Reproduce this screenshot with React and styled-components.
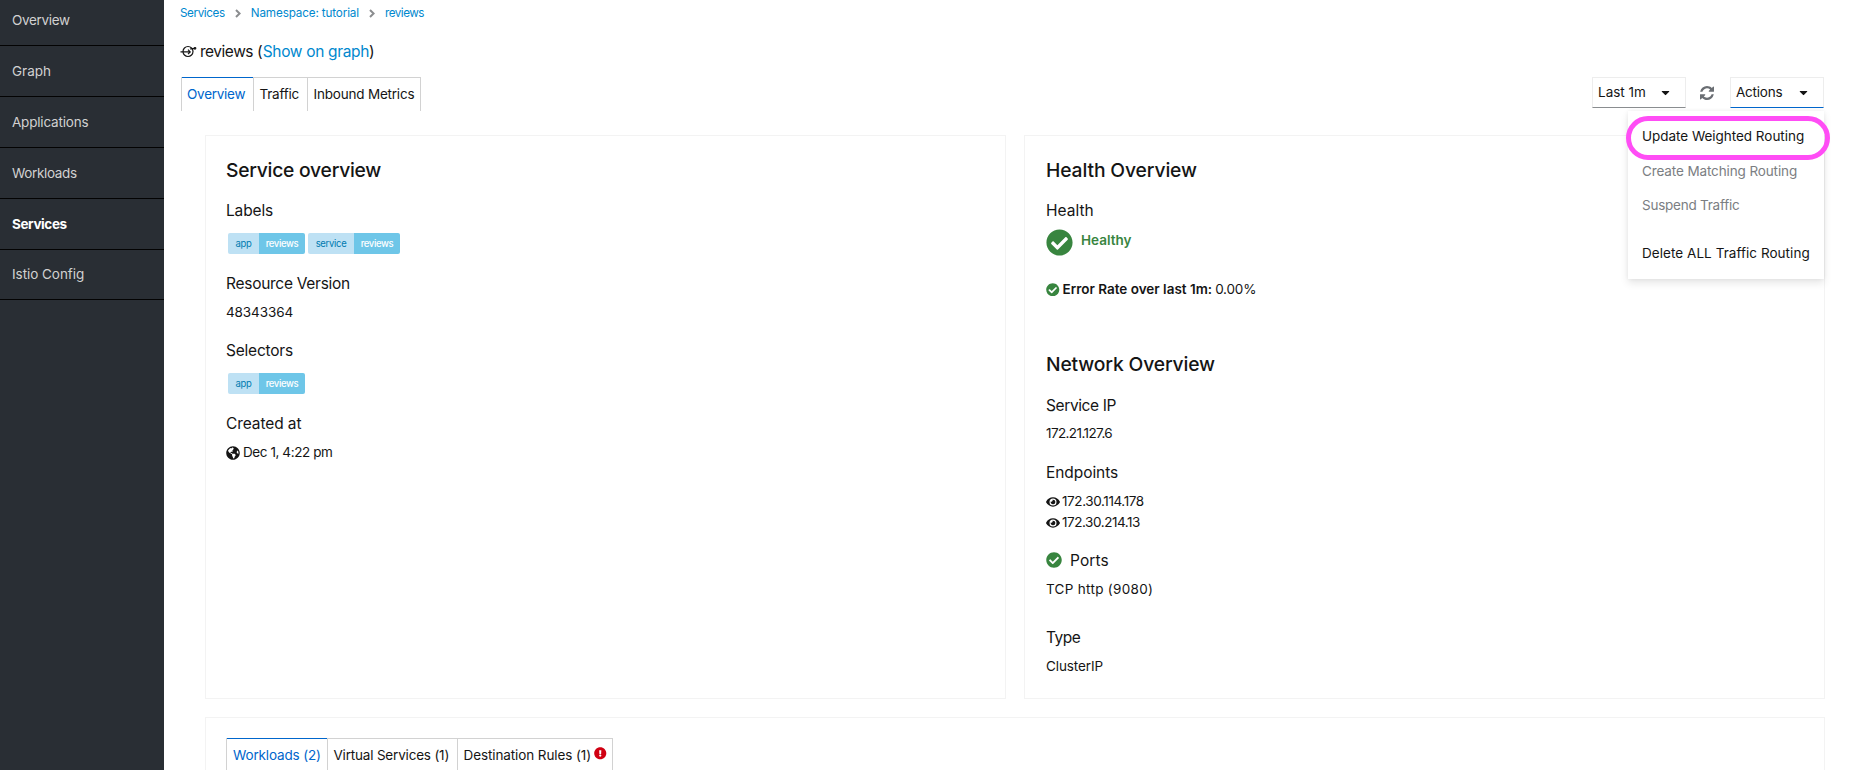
import React from "react";
import styled, { createGlobalStyle } from "styled-components";
import { FaCheckCircle, FaExclamationCircle, FaGlobeAmericas, FaEye, FaCaretDown } from "react-icons/fa";

const GlobalStyle = createGlobalStyle`
  *, *::before, *::after { box-sizing: border-box; }
  body {
    margin: 0;
    overflow: hidden;
    background: #fff;
    color: #151515;
    font-family: Inter, "Liberation Sans", sans-serif;
    font-size: 13.5px;
    line-height: 21px;
  }
`;

const Text = styled.span`
  letter-spacing: ${(p) => p.$track || 0}px;
  white-space: nowrap;
`;

const Page = styled.div`
  display: flex;
  width: 1862px;
  height: 770px;
  overflow: hidden;
`;

const Sidebar = styled.nav`
  flex: 0 0 164px;
  margin-top: -5px;
  background: #292e34;
`;

const NavItem = styled.div`
  height: 51px;
  padding: 0 12px;
  border-bottom: 1px solid #030303;
  line-height: 50px;
  color: ${(p) => (p.$active ? "#fff" : "#d1d1d1")};
  font-weight: ${(p) => (p.$active ? 700 : 400)};

  &:last-child {
    height: 50px;
    line-height: 48px;
  }
`;

const Main = styled.main`
  flex: 1;
  padding: 0 37px 0 16px;
`;

const Breadcrumb = styled.div`
  display: flex;
  align-items: center;
  height: 26px;
  color: #0088ce;
  font-size: 11.7px;
`;

const Separator = styled.svg`
  width: 6px;
  height: 9px;
  margin: 1px 10px 0 10px;
  fill: none;
  stroke: #8b8d8f;
  stroke-width: 2;
`;

const Title = styled.h1`
  display: flex;
  align-items: center;
  height: 24px;
  margin: 13px 0 14px;
  font-size: 15.5px;
  font-weight: 400;
`;

const ServiceGlyph = styled.svg`
  width: 17px;
  height: 14px;
  margin: 0 3px 1px 0;
  fill: none;
  stroke: #151515;
  stroke-width: 1.2;
`;

const TitleLink = styled(Text)`
  color: #0088ce;
`;

const Paren = styled.span`
  margin: ${(p) => (p.$open ? "0 0 0 4px" : "0")};
`;

const HeaderRow = styled.div`
  display: flex;
  justify-content: space-between;
  padding-left: 1px;
  height: 58px;
`;

const Tabs = styled.div`
  display: flex;
  height: 34px;
`;

const Tab = styled.div`
  display: flex;
  align-items: center;
  width: ${(p) => p.$width}px;
  padding: 0 0 0 ${(p) => p.$indent || 5.5}px;
  border-left: ${(p) => (p.$active ? "1px solid #d2d2d2" : "0")};
  border-right: 1px solid #d2d2d2;
  color: ${(p) => (p.$active ? "#06c" : "#151515")};
  background: linear-gradient(${(p) => (p.$active ? "#06c, #06c" : "#d2d2d2, #d2d2d2")}) top / 100% 1px no-repeat;
  background-origin: border-box;
`;

const Toolbar = styled.div`
  position: relative;
  display: flex;
  align-items: flex-start;
  margin-right: 1px;
`;

const Dropdown = styled.button`
  display: flex;
  align-items: center;
  justify-content: space-between;
  width: 94px;
  height: 31px;
  padding: 0 13px 1px 5px;
  border: 1px solid #ededed;
  border-bottom-color: ${(p) => (p.$open ? "#06c" : "#8a8d90")};
  background: #fff;
  color: #151515;
  font: inherit;
`;

const Caret = styled(FaCaretDown)`
  width: 13px;
  height: 13px;
  margin-top: 1px;
`;

const Refresh = styled.svg`
  width: 14px;
  height: 14px;
  margin: 9px 16px 0 14px;
  fill: #6a6e73;
`;

const Menu = styled.div`
  position: absolute;
  z-index: 2;
  top: 34px;
  right: 0;
  width: 196px;
  height: 168px;
  padding: 14px 0 0 14px;
  background: #fff;
  box-shadow: 0 4px 8px rgba(3, 3, 3, 0.1), 0 0 4px rgba(3, 3, 3, 0.05);
`;

const MenuItem = styled.div`
  height: 34px;
  padding-top: 1px;
  margin-top: ${(p) => (p.$separated ? 14 : 0)}px;
  color: ${(p) => (p.$disabled ? "#7b7e82" : "#151515")};

  &:first-child {
    height: 35px;
  }
`;

const Highlight = styled.div`
  position: absolute;
  z-index: 3;
  top: 39px;
  right: -5.5px;
  width: 204px;
  height: 44px;
  border: 5px solid #ff4df5;
  border-radius: 22px;
`;

const Cards = styled.div`
  display: grid;
  grid-template-columns: 801px 801px;
  column-gap: 18px;
  padding-left: 25px;
`;

const Card = styled.section`
  height: ${(p) => p.$height || 564}px;
  padding: 20px 20px 20px ${(p) => p.$indent || 20}px;
  border: 1px solid #f3f3f3;
  ${(p) => p.$wide && "grid-column: 1 / 3; margin-top: 18px;"}
`;

const Heading = styled.h2`
  margin: ${(p) => p.$gap || 0}px 0 0;
  font-size: 19.3px;
  font-weight: 500;
  line-height: 28px;
`;

const Label = styled.h3`
  display: flex;
  align-items: center;
  height: 24px;
  margin: ${(p) => p.$gap ?? 15}px 0 0;
  font-size: 15.5px;
  font-weight: 400;
  line-height: 24px;

  ${Text} {
    padding-top: 2px;
  }
`;

const Value = styled.div`
  display: flex;
  align-items: center;
  gap: ${(p) => p.$gap ?? 4}px;
  margin-top: ${(p) => p.$top ?? 7}px;
  height: 21px;
`;

const BadgeRow = styled.div`
  display: flex;
  gap: 3px;
  margin: 11px 0 0 2px;
`;

const Badge = styled.span`
  display: flex;
  height: 21px;
  overflow: hidden;
  border-radius: 2px;
  font-size: 9.5px;
`;

const BadgeKey = styled.span`
  width: ${(p) => p.$width}px;
  background: #bee1f4;
  color: #007bb0;
  text-align: center;
`;

const BadgeValue = styled.span`
  width: 46px;
  background: #6ec6e8;
  color: #fff;
  font-weight: 500;
  text-align: center;
`;

const Check = styled(FaCheckCircle)`
  width: ${(p) => p.$size}px;
  height: ${(p) => p.$size}px;
  margin-right: ${(p) => p.$gap || 0}px;
  color: #38853f;
`;

const HealthStatus = styled.div`
  display: flex;
  align-items: flex-start;
  height: 27px;
  margin: 7px 0 0;
  color: #38853f;
  font-weight: 600;
`;

const HealthText = styled(Text)`
  margin: 1px 0 0 8px;
`;

const Strong = styled(Text)`
  font-weight: 600;
`;

const Globe = styled(FaGlobeAmericas)`
  width: 14px;
  height: 14px;
`;

const Eye = styled(FaEye)`
  width: 14px;
  height: 14px;
`;

const Alert = styled(FaExclamationCircle)`
  width: 12.5px;
  height: 12.5px;
  margin: -3px 0 0 3px;
  color: #d00012;
`;

const navItems = [
  ["Overview", -0.33],
  ["Graph", 0],
  ["Applications", -0.19],
  ["Workloads", -0.34],
  ["Services", -0.4],
  ["Istio Config", -0.05],
];

function Crumb() {
  return (
    <Separator viewBox="0 0 6 9">
      <path d="M1 1 L4.6 4.5 L1 8" />
    </Separator>
  );
}

function Tag({ name, width, track }) {
  return (
    <Badge>
      <BadgeKey $width={width}><Text $track={track}>{name}</Text></BadgeKey>
      <BadgeValue><Text $track={-0.38}>reviews</Text></BadgeValue>
    </Badge>
  );
}

export default function App() {
  return (
    <Page>
      <GlobalStyle />
      <Sidebar>
        {navItems.map(([name, track]) => (
          <NavItem key={name} $active={name === "Services"}>
            <Text $track={track}>{name}</Text>
          </NavItem>
        ))}
      </Sidebar>
      <Main>
        <Breadcrumb>
          <Text $track={-0.4}>Services</Text>
          <Crumb />
          <Text $track={-0.14}>Namespace: tutorial</Text>
          <Crumb />
          <Text $track={-0.5}>reviews</Text>
        </Breadcrumb>
        <Title>
          <ServiceGlyph viewBox="0 0 17 14">
            <circle cx="8" cy="7.5" r="5" />
            <path d="M0.5 7.9 H10 M8 5.7 L10.2 7.9 L8 10.1 M10 5 Q12 4.400 15.500 4.400" />
            <circle cx="15" cy="4.3" r="0.8" />
          </ServiceGlyph>
          <Text $track={-0.48}>reviews</Text>
          <Paren $open>(</Paren>
          <TitleLink $track={-0.33}>Show on graph</TitleLink>
          <Paren>)</Paren>
        </Title>
        <HeaderRow>
          <Tabs>
            <Tab $active $width={73} $indent={5}><Text $track={-0.26}>Overview</Text></Tab>
            <Tab $width={54}><Text $track={-0.22}>Traffic</Text></Tab>
            <Tab $width={113}><Text $track={-0.2}>Inbound Metrics</Text></Tab>
          </Tabs>
          <Toolbar>
            <Dropdown><Text>Last 1m</Text><Caret /></Dropdown>
            <Refresh viewBox="0 0 1536 1536">
              <path d="M1511 928q0 5-1 7-64 268-268 434.500T764 1536q-146 0-282.500-55T238 1324l-129 129q-19 19-45 19t-45-19-19-45V960q0-26 19-45t45-19h448q26 0 45 19t19 45-19 45l-137 137q71 66 161 102t187 36q134 0 250-65t186-179q11-17 53-117 8-23 30-23h192q13 0 22.500 9.500t9.500 22.500zM1536 128v448q0 26-19 45t-45 19h-448q-26 0-45-19t-19-45 19-45l138-138Q969 256 768 256q-134 0-250 65T332 500q-11 17-53 117-8 23-30 23H50q-13 0-22.500-9.500T18 608v-7q65-268 270-434.500T768 0q146 0 284 55.500T1297 212l130-129q19-19 45-19t45 19 19 45z" />
            </Refresh>
            <Dropdown $open><Text $track={-0.21}>Actions</Text><Caret /></Dropdown>
            <Menu>
              <MenuItem><Text $track={-0.03}>Update Weighted Routing</Text></MenuItem>
              <MenuItem $disabled><Text $track={-0.12}>Create Matching Routing</Text></MenuItem>
              <MenuItem $disabled><Text $track={-0.24}>Suspend Traffic</Text></MenuItem>
              <MenuItem $separated><Text $track={0.05}>Delete ALL Traffic Routing</Text></MenuItem>
            </Menu>
            <Highlight />
          </Toolbar>
        </HeaderRow>
        <Cards>
          <Card>
            <Heading><Text $track={-0.25}>Service overview</Text></Heading>
            <Label $gap={14}><Text $track={-0.15}>Labels</Text></Label>
            <BadgeRow>
              <Tag name="app" width={31} track={-0.33} />
              <Tag name="service" width={46} track={-0.31} />
            </BadgeRow>
            <Label $gap={17}><Text $track={-0.28}>Resource Version</Text></Label>
            <Value><Text $track={-0.1}>48343364</Text></Value>
            <Label><Text $track={-0.21}>Selectors</Text></Label>
            <BadgeRow>
              <Tag name="app" width={31} track={-0.33} />
            </BadgeRow>
            <Label $gap={17}><Text $track={-0.1}>Created at</Text></Label>
            <Value $gap={3}><Globe /><Text $track={-0.42}>Dec 1, 4:22 pm</Text></Value>
          </Card>
          <Card $indent={21}>
            <Heading><Text $track={-0.13}>Health Overview</Text></Heading>
            <Label $gap={14}><Text>Health</Text></Label>
            <HealthStatus>
              <Check $size={27} />
              <HealthText $track={0}>Healthy</HealthText>
            </HealthStatus>
            <Value $top={23} $gap={3}>
              <Check $size={13.5} />
              <Strong>Error Rate over last 1m:</Strong>
              <Text $track={-0.19}>0.00%</Text>
            </Value>
            <Heading $gap={50}><Text $track={-0.15}>Network Overview</Text></Heading>
            <Label><Text $track={-0.38}>Service IP</Text></Label>
            <Value $top={6}><Text $track={-0.6}>172.21.127.6</Text></Value>
            <Label $gap={16}><Text $track={-0.07}>Endpoints</Text></Label>
            <Value $gap={2}><Eye /><Text $track={-0.4}>172.30.114.178</Text></Value>
            <Value $top={0} $gap={2}><Eye /><Text $track={-0.45}>172.30.214.13</Text></Value>
            <Label><Check $size={16} $gap={8} /><Text $track={0.1}>Ports</Text></Label>
            <Value><Text $track={0.3}>TCP http (9080)</Text></Value>
            <Label $gap={25}><Text $track={-0.5}>Type</Text></Label>
            <Value><Text $track={-0.1}>ClusterIP</Text></Value>
          </Card>
          <Card $wide $height={80}>
            <Tabs>
              <Tab $active $width={102} $indent={6}><Text $track={-0.15}>Workloads (2)</Text></Tab>
              <Tab $width={130}><Text $track={-0.19}>Virtual Services (1)</Text></Tab>
              <Tab $width={155}><Text $track={-0.1}>Destination Rules (1)</Text><Alert /></Tab>
            </Tabs>
          </Card>
        </Cards>
      </Main>
    </Page>
  );
}
